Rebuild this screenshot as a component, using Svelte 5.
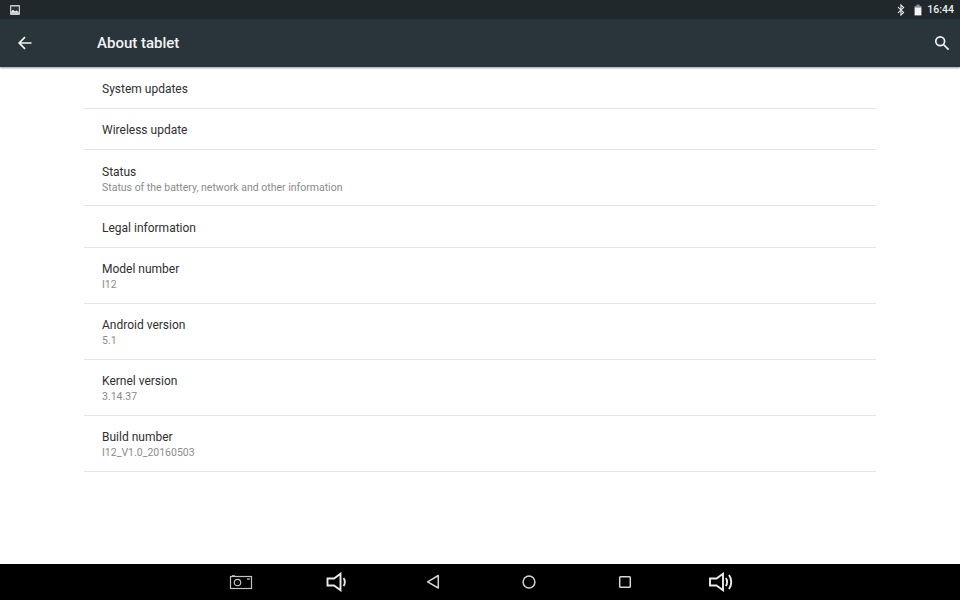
<script lang="ts">
  const rows = [
    { title: 'System updates', h: 41.5 },
    { title: 'Wireless update', h: 41.5 },
    { title: 'Status', sub: 'Status of the battery, network and other information', h: 56 },
    { title: 'Legal information', h: 41.5 },
    { title: 'Model number', sub: 'I12', h: 56 },
    { title: 'Android version', sub: '5.1', h: 56 },
    { title: 'Kernel version', sub: '3.14.37', h: 56 },
    { title: 'Build number', sub: 'I12_V1.0_20160503', h: 56 }
  ];
</script>

<div class="screen">
  <div class="status">
    <svg class="notif" width="12" height="12" viewBox="0 0 12 12">
      <rect x="1" y="1" width="10" height="10" rx="1" fill="#c9cccd" />
      <rect x="2.2" y="2.5" width="7.6" height="6.2" fill="#2a3338" />
      <path d="M2.2 8.8 V7.6 L4 5.8 L6 7.4 L7.4 6.6 L9.8 8 V8.8 Z" fill="#f2f3f3" />
    </svg>
    <div class="status-right">
      <svg width="8" height="12" viewBox="0 0 8 12" fill="none" stroke="#e8eaeb" stroke-width="1.1">
        <path d="M1 3.2 L6.6 8.4 L3.9 11 V1 L6.6 3.6 L1 8.8" />
      </svg>
      <svg class="battery" width="8" height="12" viewBox="0 0 8 12">
        <rect x="2.4" y="0.6" width="3.2" height="1.6" fill="#8a9093" />
        <rect x="0.6" y="2" width="6.8" height="2" fill="#8a9093" />
        <rect x="0.6" y="3.6" width="6.8" height="7.8" fill="#f4f5f5" />
      </svg>
      <span class="time">16:44</span>
    </div>
  </div>

  <header class="bar">
    <svg class="back" width="16" height="16" viewBox="0 0 16 16" fill="none" stroke="#f2f3f4" stroke-width="1.7">
      <path d="M14.5 8 H2.5 M8 2.2 L2.2 8 L8 13.8" />
    </svg>
    <h1>About tablet</h1>
    <svg class="search" width="16" height="16" viewBox="0 0 16 16" fill="none" stroke="#f2f3f4" stroke-width="1.7">
      <circle cx="6.2" cy="6.2" r="4.4" />
      <path d="M9.5 9.5 L14.6 14.6" />
    </svg>
  </header>

  <main class="list">
    {#each rows as row}
      <div class="row" style={`height:${row.h}px`}>
        <div class="title">{row.title}</div>
        {#if row.sub}<div class="sub">{row.sub}</div>{/if}
      </div>
    {/each}
  </main>

  <nav class="nav">
    <span class="btn">
      <svg width="24" height="16" viewBox="0 0 24 16" fill="none" stroke="#c4c4c4" stroke-width="1.2">
        <rect x="1.5" y="2.5" width="21" height="12" />
        <circle cx="8.5" cy="8.5" r="3.2" />
        <path d="M18 5 H21" />
        <path d="M3 1.5 H6" stroke-width="0.8" />
      </svg>
    </span>
    <span class="btn">
      <svg width="22" height="20" viewBox="0 0 22 20" fill="none" stroke="#ececec" stroke-width="1.9">
        <path d="M1.5 6.5 H8 L14.5 1.8 V18.2 L8 13.5 H1.5 Z" />
        <path d="M17.5 6 C19.2 8 19.2 12 17.5 14" />
      </svg>
    </span>
    <span class="btn">
      <svg width="14" height="16" viewBox="0 0 14 16" fill="none" stroke="#d6d6d6" stroke-width="1.5">
        <path d="M12.3 1.5 V14 L1.6 7.8 Z" stroke-linejoin="round" />
      </svg>
    </span>
    <span class="btn">
      <svg width="14" height="14" viewBox="0 0 14 14" fill="none" stroke="#d6d6d6" stroke-width="1.5">
        <circle cx="7" cy="7" r="5.9" />
      </svg>
    </span>
    <span class="btn">
      <svg width="14" height="14" viewBox="0 0 14 14" fill="none" stroke="#d6d6d6" stroke-width="1.5">
        <rect x="1.7" y="1.7" width="10.6" height="10.6" rx="0.8" />
      </svg>
    </span>
    <span class="btn">
      <svg width="24" height="20" viewBox="0 0 24 20" fill="none" stroke="#ececec" stroke-width="1.9">
        <path d="M1 6.5 H7.5 L14 1.8 V18.2 L7.5 13.5 H1 Z" />
        <path d="M16.8 6 C18.5 8 18.5 12 16.8 14" />
        <path d="M20 3 C23 7 23 13 20 17" />
      </svg>
    </span>
  </nav>
</div>

<style>
  :global(body) { margin: 0; }
  .screen {
    width: 960px;
    height: 600px;
    display: flex;
    flex-direction: column;
    background: #fff;
    font-family: Roboto, "Liberation Sans", sans-serif;
    overflow: hidden;
  }
  .status {
    height: 19px;
    flex: none;
    display: flex;
    align-items: center;
    justify-content: space-between;
    padding: 0 6px 0 9px;
    background: #20282c;
  }
  .notif { display: block; }
  .status-right { display: flex; align-items: center; }
  .battery { margin-left: 9px; }
  .time {
    margin-left: 5px;
    color: #eceeef;
    font-size: 10.5px;
    font-weight: 500;
  }
  .bar {
    height: 48px;
    flex: none;
    display: flex;
    align-items: center;
    padding: 0 10px 0 17px;
    background: #2a353b;
    box-shadow: 0 1px 2px rgba(0, 0, 0, 0.4);
    position: relative;
  }
  .bar h1 {
    margin: 0 0 0 64px;
    color: #f3f4f5;
    font-size: 15px;
    font-weight: 500;
  }
  .search { margin-left: auto; }
  .list {
    flex: 1;
    margin: 0 84px;
  }
  .row {
    box-sizing: border-box;
    border-bottom: 1px solid #e3e3e3;
    padding: 3px 18px 0;
    display: flex;
    flex-direction: column;
    justify-content: center;
  }
  .title {
    color: #2f2f2f;
    font-size: 12px;
    line-height: 16px;
  }
  .sub {
    color: #8b8b8b;
    font-size: 10.5px;
    line-height: 15px;
  }
  .nav {
    height: 36px;
    flex: none;
    display: flex;
    justify-content: center;
    padding-left: 1px;
    background: #000;
  }
  .btn {
    width: 96px;
    display: flex;
    align-items: center;
    justify-content: center;
  }
</style>
